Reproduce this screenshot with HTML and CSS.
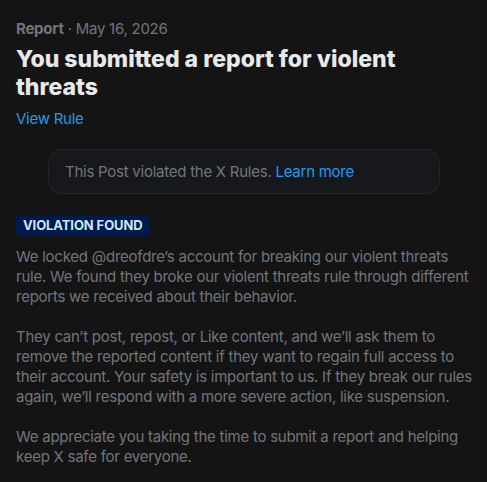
FILE: index.html
```html
<!DOCTYPE html>
<html lang="en">
<head>
<meta charset="utf-8">
<title>Report</title>
<link rel="stylesheet" href="styles.css">
</head>
<body>
<main class="page">
  <div class="meta"><span class="meta-kind">Report</span> · May 16, 2026</div>
  <h1 class="title">You submitted a report for violent threats</h1>
  <a class="rule-link" href="#">View Rule</a>
  <div class="notice">This Post violated the X Rules. <a class="link" href="#">Learn more</a></div>
  <div class="badge">VIOLATION FOUND</div>
  <div class="body">
    <p>We locked @dreofdre’s account for breaking our violent threats rule. We found they broke our violent threats rule through different reports we received about their behavior.</p>
    <p>They can’t post, repost, or Like content, and we’ll ask them to remove the reported content if they want to regain full access to their account. Your safety is important to us. If they break our rules again, we’ll respond with a more severe action, like suspension.</p>
    <p>We appreciate you taking the time to submit a report and helping keep X safe for everyone.</p>
  </div>
</main>
</body>
</html>
```
FILE: styles.css
```css
html, body {
  margin: 0;
  padding: 0;
  background: #141414;
}
body {
  font-family: Inter, "Noto Sans", sans-serif;
  color: #71767b;
  font-size: 15px;
  letter-spacing: -0.25px;
}
.page {
  padding: 19px 16px 0 16px;
  display: flex;
  flex-direction: column;
  align-items: flex-start;
}
.meta {
  font-size: 15px;
  line-height: 20px;
  color: #71767b;
}
.meta-kind {
  font-weight: 700;
}
.title {
  margin: 6px 0 0 0;
  font-size: 23px;
  line-height: 28px;
  font-weight: 800;
  color: #e7e9ea;
  letter-spacing: 0;
}
.rule-link {
  margin-top: 8px;
  font-size: 15px;
  line-height: 20px;
  color: #1d9bf0;
  text-decoration: none;
}
.notice {
  align-self: stretch;
  margin: 20px 31px 0 32px;
  padding: 0 16px;
  height: 43px;
  display: flex;
  align-items: center;
  background: #17181c;
  border: 1px solid #23262b;
  border-radius: 14px;
  font-size: 15px;
  color: #71767b;
}
.notice .link {
  color: #1d9bf0;
  text-decoration: none;
  margin-left: 4px;
}
.badge {
  margin-top: 22px;
  padding: 0 7px;
  height: 19px;
  line-height: 19px;
  background: #001a4d;
  color: #c9e8f7;
  font-size: 13px;
  font-weight: 700;
  border-radius: 3px;
  letter-spacing: -0.1px;
}
.body {
  margin-top: 12px;
  margin-right: -6px;
  font-size: 15px;
  line-height: 20px;
  color: #71767b;
}
.body p {
  margin: 0 0 20px 0;
}
```
